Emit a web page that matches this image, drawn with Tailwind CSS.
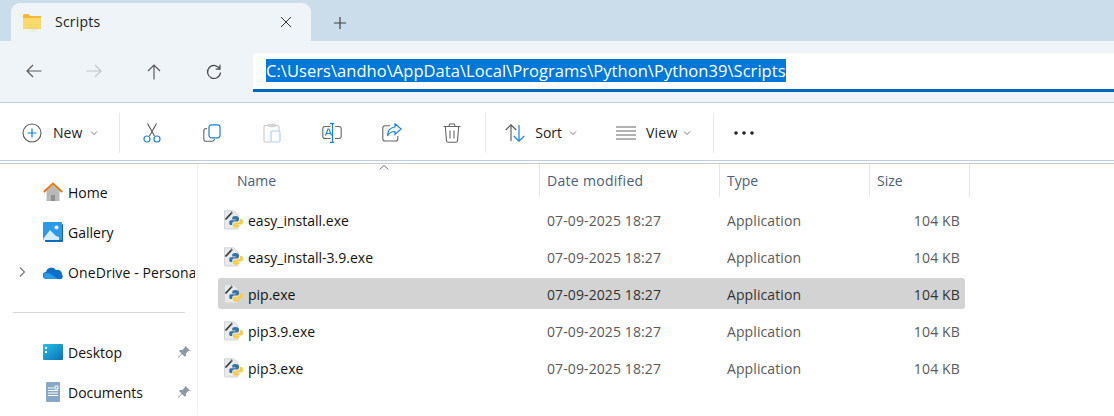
<!DOCTYPE html>
<html><head><meta charset="utf-8"><script src="https://cdn.jsdelivr.net/npm/@tailwindcss/browser@4"></script></head>
<body class="w-[1114px] h-[416px] overflow-hidden bg-white font-['Open_Sans',sans-serif] text-[#1a1a1a]">
<svg class="hidden"><defs>
<symbol id="py" viewBox="0 0 20 20">
<path d="M1.500 .8h9l4.500 4V19H2.500a1 1 0 0 1-1-1z" fill="#e8eaec" stroke="#d2d5d8"/>
<path d="M2.500 9.500 8.500 3" stroke="#3a3a3a" stroke-width="1.800"/><path d="M8 1l2 2-2 1.500z" fill="#666"/>
<g transform="translate(2.200 .6)">
<path d="M10 5.500c-2 0-3 .8-3 2.200V9h3.500v.6H5.500C4.300 9.600 4 11 4 12.200c0 1.400.6 2.300 1.700 2.300H7v-1.700c0-1.200 1-2 2-2h3c1 0 1.800-.8 1.800-1.800V7.500C13.800 6.200 12 5.500 10 5.500z" fill="#3572a5"/>
<path d="M14.500 8.500v1.700c0 1.200-1 2-2 2h-3c-1 0-1.800.8-1.800 1.800v1.400c0 1.200 1.800 1.800 3.300 1.800 2 0 3.300-.7 3.300-2v-.7h-3.300V14H16c1.200 0 1.800-1 1.800-2.800 0-1.500-.5-2.700-1.700-2.700z" fill="#f7ce45"/>
</g>
</symbol>
<symbol id="pin" viewBox="0 0 14 14"><path d="M8.500 1 13 5.500l-1 .8-.8-.2-2.300 2.300.2 2.200-1.300 1.200L5 9l-3.500 4L1 12.500 4.600 8.600 2 6l1.200-1.300 2.200.2L7.800 2.600l-.2-.7z" fill="#8c98a3"/></symbol>
<symbol id="chev" viewBox="0 0 8 6"><path d="M1 1.500 4 4.500 7 1.500" fill="none" stroke="#7a7a7a"/></symbol>
</defs></svg>

<!-- tab strip -->
<div class="h-[41px] bg-[#cbdcea] pt-[3px] pl-[11px] flex items-stretch">
  <div class="w-[300px] bg-[#eff4f9] rounded-t-[9px] flex items-center pl-[12px] pr-[19px]">
    <svg class="w-[18px] h-[15px] mt-[-1px]" viewBox="0 0 18 15"><path d="M0 1.500A1.500 1.500 0 0 1 1.500 0h4l2 2H18v13H1a1 1 0 0 1-1-1z" fill="#f5b93a"/><path d="M0 4h18v10a1 1 0 0 1-1 1H1a1 1 0 0 1-1-1z" fill="#fcd96b"/></svg>
    <span class="ml-[14px] text-[14px] leading-none tracking-[0.2px]">Scripts</span>
    <svg class="ml-auto w-[12px] h-[12px]" viewBox="0 0 12 12"><path d="M1 1l10 10M11 1 1 11" stroke="#333" stroke-width="1"/></svg>
  </div>
  <svg class="ml-[23px] mt-[14px] w-[12px] h-[12px]" viewBox="0 0 12 12"><path d="M6 0v12M0 6h12" stroke="#444" stroke-width="1.200"/></svg>
</div>

<!-- address row -->
<div class="h-[62px] bg-[#eff4f9] border-b border-[#bcd0df] flex items-center">
  <div class="w-[253px] flex pl-[4px]">
    <div class="w-[60px] flex justify-center"><svg class="w-[16px] h-[14px]" viewBox="0 0 16 14"><path d="M15.500 7H1M7 1 1 7l6 6" fill="none" stroke="#5a5a5a" stroke-width="1.200"/></svg></div>
    <div class="w-[60px] flex justify-center"><svg class="w-[16px] h-[14px]" viewBox="0 0 16 14"><path d="M.5 7H15M9 1l6 6-6 6" fill="none" stroke="#c2c6ca" stroke-width="1.200"/></svg></div>
    <div class="w-[60px] flex justify-center"><svg class="w-[14px] h-[16px]" viewBox="0 0 14 16"><path d="M7 15.500V1M1 7l6-6 6 6" fill="none" stroke="#5a5a5a" stroke-width="1.200"/></svg></div>
    <div class="w-[60px] flex justify-center"><svg class="w-[16px] h-[16px]" viewBox="0 0 16 16"><path d="M13.800 5A6.500 6.500 0 1 0 14.500 8.500M14 .8V5.200H9.700" fill="none" stroke="#444" stroke-width="1.200"/></svg></div>
  </div>
  <div class="flex-1 h-[39px] mb-[-1px] bg-white border-b-[3px] border-[#0067c0] rounded-tl-[4px] flex items-center pl-[13px]">
    <span class="bg-[#0078d7] text-white text-[16.5px] leading-[23px] h-[23px] tracking-[0.05px] whitespace-nowrap w-[520px] overflow-hidden">C:\Users\andho\AppData\Local\Programs\Python\Python39\Scripts</span>
  </div>
</div>

<!-- toolbar -->
<div class="h-[58px] border-b border-[#bcd0df] flex items-center text-[14px] pl-[22px] pt-[2px] text-[#222]">
  <svg class="w-[20px] h-[20px]" viewBox="0 0 20 20"><circle cx="10" cy="10" r="9" fill="none" stroke="#5c5c5c" stroke-width="1.100"/><path d="M10 5.500v9M5.500 10h9" stroke="#0a78d4" stroke-width="1.200"/></svg>
  <span class="ml-[11px]">New</span>
  <svg class="ml-[8px] w-[8px] h-[6px]"><use href="#chev"/></svg>
  <div class="ml-[21px] w-px h-[40px] bg-[#e8e8e8]"></div>
  <div class="w-[60px] ml-[2px] flex justify-center ">
    <svg class="w-[18px] h-[20px]" viewBox="0 0 18 20"><path d="M4.500.5l7 12.500M13.500.5l-7 12.500" stroke="#555" stroke-width="1.100"/><circle cx="4" cy="16" r="3" fill="none" stroke="#1a82d9" stroke-width="1.200"/><circle cx="14" cy="16" r="3" fill="none" stroke="#1a82d9" stroke-width="1.200"/></svg>
  </div>
  <div class="w-[60px] flex justify-center">
    <svg class="w-[18px] h-[18px]" viewBox="0 0 18 18"><path d="M4 4.500H3A2.500 2.500 0 0 0 .8 7v8.200A2.200 2.200 0 0 0 3 17.300h6A2.300 2.300 0 0 0 11.400 15" fill="none" stroke="#666" stroke-width="1.100"/><rect x="6" y=".8" width="11" height="13" rx="2.500" fill="none" stroke="#1a82d9" stroke-width="1.200"/></svg>
  </div>
  <div class="w-[60px] flex justify-center">
    <svg class="w-[18px] h-[20px]" viewBox="0 0 18 20"><path d="M5 2.500H2.500A1.500 1.500 0 0 0 1 4v13.500A1.500 1.500 0 0 0 2.500 19H8M13 2.500h1.500A1.500 1.500 0 0 1 16 4v4" fill="none" stroke="#c9c9c9" stroke-width="1.100"/><rect x="5" y=".8" width="8" height="3.500" rx="1" fill="#d4d4d4"/><rect x="8" y="8" width="9" height="11" rx="1.500" fill="none" stroke="#a9d2f2" stroke-width="1.200"/></svg>
  </div>
  <div class="w-[60px] flex justify-center">
    <svg class="w-[20px] h-[20px]" viewBox="0 0 20 20"><path d="M8.500 3.500H3A2.300 2.300 0 0 0 .8 5.800v7.400A2.300 2.300 0 0 0 3 15.500h5.500M13 3.500h3.800A2.300 2.300 0 0 1 19.200 5.800v7.400a2.300 2.300 0 0 1-2.400 2.300H13" fill="none" stroke="#666" stroke-width="1.100"/><path d="M8 .6h4M8 19.400h4M10.500 .6v18.800" fill="none" stroke="#1a82d9" stroke-width="1.200"/><path d="M3.500 12.500 6 6h1l2.500 6.500M4.500 10.500h4" fill="none" stroke="#1a82d9" stroke-width="1.100"/></svg>
  </div>
  <div class="w-[60px] flex justify-center">
    <svg class="w-[20px] h-[19px]" viewBox="0 0 20 19"><path d="M8 2.800H3A2.300 2.300 0 0 0 .8 5.100v10.600A2.300 2.300 0 0 0 3 18h10.500a2.300 2.300 0 0 0 2.300-2.300V13" fill="none" stroke="#666" stroke-width="1.100"/><path d="M13 .8 19.200 6 13 11.500V8.500C9.500 8.500 7 10 5.500 13c0-5 2.500-8.500 7.500-9z" fill="none" stroke="#1a82d9" stroke-width="1.200"/></svg>
  </div>
  <div class="w-[60px] flex justify-center">
    <svg class="w-[18px] h-[20px]" viewBox="0 0 18 20"><path d="M.5 3.500h17M6 3.500 6.500 1h5l.5 2.500M2.300 3.500 3.500 17.500A1.800 1.800 0 0 0 5.300 19.300h7.400a1.800 1.800 0 0 0 1.800-1.800l1.200-14M7 7.500v8M11 7.500v8" fill="none" stroke="#666" stroke-width="1.100"/></svg>
  </div>
  <div class="ml-[3px] w-px h-[40px] bg-[#e8e8e8]"></div>
  <svg class="ml-[19px] w-[20px] h-[20px]" viewBox="0 0 20 20"><path d="M6 18V2M.8 7 6 1.800 11.200 7" fill="none" stroke="#555" stroke-width="1.100"/><path d="M14 2v16M8.800 13 14 18.200 19.200 13" fill="none" stroke="#1a82d9" stroke-width="1.200"/></svg>
  <span class="ml-[10px]">Sort</span>
  <svg class="ml-[7px] w-[8px] h-[6px]"><use href="#chev"/></svg>
  <svg class="ml-[39px] w-[20px] h-[14px]" viewBox="0 0 20 14"><path d="M0 1h20M0 5h20M0 9h20M0 13h20" stroke="#666" stroke-width="1.100"/></svg>
  <span class="ml-[10px] tracking-[0.2px]">View</span>
  <svg class="ml-[6px] w-[8px] h-[6px]"><use href="#chev"/></svg>
  <div class="ml-[22px] w-px h-[40px] bg-[#e8e8e8]"></div>
  <svg class="ml-[20px] w-[20px] h-[4px]" viewBox="0 0 20 4"><circle cx="2" cy="2" r="1.800" fill="#222"/><circle cx="10" cy="2" r="1.800" fill="#222"/><circle cx="18" cy="2" r="1.800" fill="#222"/></svg>
</div>

<div class="h-[2px]"></div>
<div class="h-[252px] border-t border-[#c4ccd2] flex">
  <!-- sidebar -->
  <nav class="w-[198px] shrink-0 border-r border-[#f0f0f0] overflow-hidden text-[14px] text-[#111] pt-[8px]">
    <div class="h-[40px] flex items-center pl-[43px]">
      <svg class="w-[20px] h-[20px]" viewBox="0 0 20 20"><path d="M3.500 9v10h13V9L10 3z" fill="#b9b9b9"/><rect x="8" y="13" width="4" height="6" fill="#8f8f8f"/><path d="M.8 10 10 1.500 19.200 10" fill="none" stroke="#e4760f" stroke-width="2"/></svg>
      <span class="ml-[5px]">Home</span>
    </div>
    <div class="h-[40px] flex items-center pl-[43px]">
      <svg class="w-[20px] h-[20px]" viewBox="0 0 20 20"><rect x="2" y="2" width="18" height="18" rx="1" fill="#0f6cbd"/><rect width="19" height="18" rx="1" fill="#2b9ae8"/><circle cx="13.500" cy="5.500" r="2" fill="#fff"/><path d="M0 17 7 8l6 6 3 1v3H1z" fill="#d5ecfb"/></svg>
      <span class="ml-[5px]">Gallery</span>
    </div>
    <div class="h-[40px] flex items-center pl-[19px]">
      <svg class="w-[6px] h-[10px] shrink-0" viewBox="0 0 6 10"><path d="M1 .5 5.500 5 1 9.500" fill="none" stroke="#777" stroke-width="1.200"/></svg>
      <svg class="ml-[18px] w-[20px] h-[13px] shrink-0" viewBox="0 0 20 13"><path d="M3.500 13A3.500 3.500 0 0 1 3 6 5.500 5.500 0 0 1 13 4a4.500 4.500 0 0 1 6 4.500c1.300 1 1 4.500-1.500 4.500z" fill="#0a6fc9"/><path d="M3.500 13A3.500 3.500 0 0 1 1 7.500C5 6 8 8 10.500 10L15 13z" fill="#2c9be6"/></svg>
      <span class="ml-[5px] w-[127px] shrink-0 overflow-hidden whitespace-nowrap tracking-[0.1px]">OneDrive - Personal</span>
    </div>
    <div class="ml-[13px] w-[172px] h-px bg-[#d8d8d8] mt-[20px] mb-[19px]"></div>
    <div class="h-[40px] flex items-center pl-[43px] pr-[6px]">
      <svg class="w-[20px] h-[16px]" viewBox="0 0 20 16"><defs><linearGradient id="dk" x1="0" y1="0" x2="1" y2="1"><stop offset="0" stop-color="#27c1e3"/><stop offset="1" stop-color="#0a70b8"/></linearGradient></defs><rect width="20" height="16" rx="1" fill="url(#dk)"/><rect x="2" y="3" width="2" height="2" fill="#fff"/><rect x="2" y="7" width="2" height="2" fill="#fff"/></svg>
      <span class="ml-[5px]">Desktop</span>
      <svg class="ml-auto w-[14px] h-[14px]"><use href="#pin"/></svg>
    </div>
    <div class="h-[40px] flex items-center pl-[46px] pr-[6px]">
      <svg class="w-[14px] h-[20px]" viewBox="0 0 14 20"><rect width="14" height="20" rx="1" fill="#89a7c6"/><path d="M2 6h6M9 4h3v3H9zM2 8.500h10M2 11h10M2 13.500h10" stroke="#fff" fill="none"/></svg>
      <span class="ml-[8px]">Documents</span>
      <svg class="ml-auto w-[14px] h-[14px]"><use href="#pin"/></svg>
    </div>
  </nav>

  <!-- file list -->
  <main class="flex-1 text-[14px] relative">
    <svg class="absolute left-[181px] top-[1px] w-[10px] h-[5px]" viewBox="0 0 10 5"><path d="M.5 4.500 5 .5l4.500 4" fill="none" stroke="#7a7a7a"/></svg>
    <div class="h-[33px] flex text-[#4c6077] text-[14px]">
      <div class="w-[342px] pl-[39px] border-r border-[#e5e5e5] flex items-center">Name</div>
      <div class="w-[180px] pl-[7px] border-r border-[#e5e5e5] flex items-center tracking-[0.3px]">Date modified</div>
      <div class="w-[150px] pl-[7px] border-r border-[#e5e5e5] flex items-center">Type</div>
      <div class="w-[100px] pl-[7px] border-r border-[#e5e5e5] flex items-center">Size</div>
    </div>
    <div class="pt-[7px] pl-[20px] w-[767px] flex flex-col gap-[6px]">
      <div class="h-[31px] rounded-[3px] flex items-center">
        <svg class="ml-[5px] w-[20px] h-[20px] shrink-0"><use href="#py"/></svg>
        <span class="ml-[5px] pt-[2px] w-[299px] text-[#111]">easy_install.exe</span>
        <span class="pt-[2px] w-[180px] tracking-[0.1px] text-[#5a5a5a]">07-09-2025 18:27</span>
        <span class="pt-[2px] w-[150px] tracking-[0.1px] text-[#5a5a5a]">Application</span>
        <span class="pt-[2px] w-[83px] text-right tracking-[0.15px] text-[#5a5a5a]">104 KB</span>
      </div>
      <div class="h-[31px] rounded-[3px] flex items-center">
        <svg class="ml-[5px] w-[20px] h-[20px] shrink-0"><use href="#py"/></svg>
        <span class="ml-[5px] pt-[2px] w-[299px] text-[#111]">easy_install-3.9.exe</span>
        <span class="pt-[2px] w-[180px] tracking-[0.1px] text-[#5a5a5a]">07-09-2025 18:27</span>
        <span class="pt-[2px] w-[150px] tracking-[0.1px] text-[#5a5a5a]">Application</span>
        <span class="pt-[2px] w-[83px] text-right tracking-[0.15px] text-[#5a5a5a]">104 KB</span>
      </div>
      <div class="h-[31px] rounded-[3px] flex items-center bg-[#d3d3d3]">
        <svg class="ml-[5px] w-[20px] h-[20px] shrink-0"><use href="#py"/></svg>
        <span class="ml-[5px] pt-[2px] w-[299px] text-[#111]">pip.exe</span>
        <span class="pt-[2px] w-[180px] tracking-[0.1px] text-[#333]">07-09-2025 18:27</span>
        <span class="pt-[2px] w-[150px] tracking-[0.1px] text-[#333]">Application</span>
        <span class="pt-[2px] w-[83px] text-right tracking-[0.15px] text-[#333]">104 KB</span>
      </div>
      <div class="h-[31px] rounded-[3px] flex items-center">
        <svg class="ml-[5px] w-[20px] h-[20px] shrink-0"><use href="#py"/></svg>
        <span class="ml-[5px] pt-[2px] w-[299px] text-[#111]">pip3.9.exe</span>
        <span class="pt-[2px] w-[180px] tracking-[0.1px] text-[#5a5a5a]">07-09-2025 18:27</span>
        <span class="pt-[2px] w-[150px] tracking-[0.1px] text-[#5a5a5a]">Application</span>
        <span class="pt-[2px] w-[83px] text-right tracking-[0.15px] text-[#5a5a5a]">104 KB</span>
      </div>
      <div class="h-[31px] rounded-[3px] flex items-center">
        <svg class="ml-[5px] w-[20px] h-[20px] shrink-0"><use href="#py"/></svg>
        <span class="ml-[5px] pt-[2px] w-[299px] text-[#111]">pip3.exe</span>
        <span class="pt-[2px] w-[180px] tracking-[0.1px] text-[#5a5a5a]">07-09-2025 18:27</span>
        <span class="pt-[2px] w-[150px] tracking-[0.1px] text-[#5a5a5a]">Application</span>
        <span class="pt-[2px] w-[83px] text-right tracking-[0.15px] text-[#5a5a5a]">104 KB</span>
      </div>
    </div>
  </main>
</div>
</body></html>
